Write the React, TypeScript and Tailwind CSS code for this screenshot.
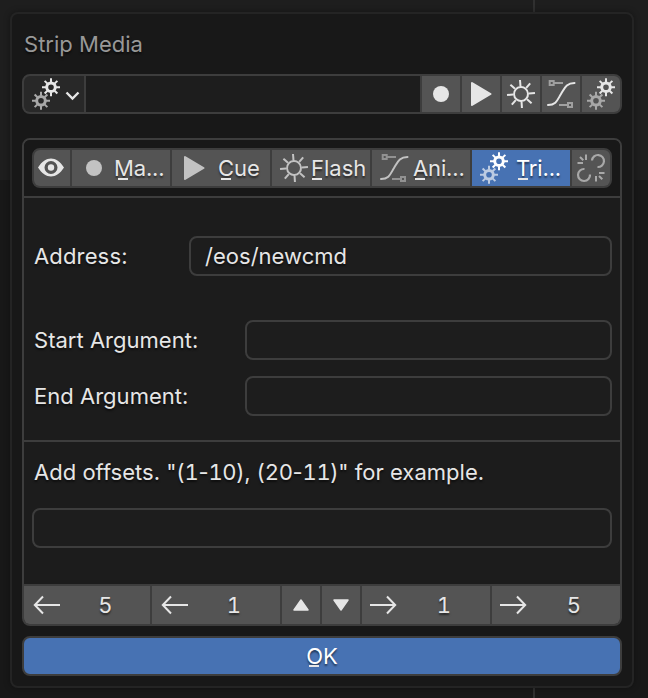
import type { ReactNode } from "react";

const LIGHT = "#e6e6e6";
const DIM = "#c2c2c2";

function Gear({ x, y, color }: { x: number; y: number; color: string }) {
  return (
    <g transform={`translate(${x} ${y})`} stroke={color} fill="none">
      <circle r="4.3" strokeWidth="3" />
      {[0, 45, 90, 135, 180, 225, 270, 315].map((a) => (
        <path key={a} d="M0-5V-9" strokeWidth="2" transform={`rotate(${a})`} />
      ))}
    </g>
  );
}

function Icon({ children }: { children: ReactNode }) {
  return (
    <svg width="32" height="32" viewBox="0 0 32 32" className="block shrink-0">
      {children}
    </svg>
  );
}

function GearsIcon({ front = LIGHT, back = "#a8a8a8" }: { front?: string; back?: string }) {
  return (
    <Icon>
      <Gear x={21} y={9.2} color={front} />
      <Gear x={11} y={22.8} color={back} />
    </Icon>
  );
}

function DotIcon({ color = LIGHT }: { color?: string }) {
  return (
    <Icon>
      <circle cx="16" cy="16" r="8" fill={color} />
    </Icon>
  );
}

function PlayIcon({ color = LIGHT }: { color?: string }) {
  return (
    <Icon>
      <path d="M7 5L25.500 16L7 27Z" fill={color} stroke={color} strokeWidth="2" strokeLinejoin="round" />
    </Icon>
  );
}

function SunIcon({ color = LIGHT }: { color?: string }) {
  return (
    <Icon>
      <g transform="translate(16 16) rotate(-4)" stroke={color} strokeWidth="2" fill="none">
        <circle r="7" />
        {[0, 45, 90, 135, 180, 225, 270, 315].map((a) => (
          <path key={a} d="M0-8V-14" transform={`rotate(${a})`} />
        ))}
      </g>
    </Icon>
  );
}

function CurveIcon({ color = LIGHT, handle = "#a0a0a0" }: { color?: string; handle?: string }) {
  return (
    <Icon>
      <g fill="none" strokeWidth="2" stroke={handle}>
        <path d="M4.7 3H8.7V7H4.7ZM9 5H18M23 25H27V29H23ZM14 27H23" />
        <path d="M3 27C11.500 27 12.500 21.500 16 16S21 5 29.500 5" stroke={color} strokeLinecap="round" />
      </g>
    </Icon>
  );
}

function EyeIcon() {
  return (
    <Icon>
      <path
        fillRule="evenodd"
        fill={LIGHT}
        d="M2 15.500C9.500 3.500 20.500 3.500 28 15.500C20.500 27.500 9.500 27.500 2 15.500ZM15 9A6.500 6.500 0 1 0 15 22A6.500 6.500 0 1 0 15 9Z"
      />
      <circle cx="15" cy="15.500" r="3.200" fill={LIGHT} />
    </Icon>
  );
}

function UnlinkIcon() {
  return (
    <Icon>
      <g fill="none" stroke="#a8a8a8" strokeWidth="2.200">
        <path d="M17 8.500A6 6 0 1 1 22.500 15M9.500 17A6 6 0 1 0 15 22.500" />
        <path d="M5 5L8.300 8.300M11 2.500V8M2.500 11H8M24 24L27.300 27.300M21 24V29.500M24 21H29.500" strokeWidth="2" />
      </g>
    </Icon>
  );
}

function ArrowIcon({ right = false }: { right?: boolean }) {
  return (
    <svg width="28" height="20" viewBox="0 0 28 20" className={right ? "shrink-0 rotate-180" : "shrink-0"}>
      <path d="M27 10H2M10 1.500L1.800 10L10 18.500" fill="none" stroke={LIGHT} strokeWidth="2" />
    </svg>
  );
}

function TriangleIcon({ down = false }: { down?: boolean }) {
  return (
    <svg width="16" height="12" viewBox="0 0 16 12" className={down ? "rotate-180" : ""}>
      <path d="M8 1L15 11H1Z" fill={LIGHT} stroke={LIGHT} strokeWidth="1.500" strokeLinejoin="round" />
    </svg>
  );
}

/* Label whose first letter carries the keyboard accelerator mark. */
function Accel({ text, mark }: { text: string; mark: string }) {
  return (
    <span className="relative whitespace-nowrap">
      {text}
      <span className={`absolute top-[23px] h-[2px] w-[10px] bg-[#e6e6e6] ${mark}`} />
    </span>
  );
}

function Tab({ icon, text, pad, mark, active = false }: { icon: ReactNode; text: string; pad: string; mark: string; active?: boolean }) {
  return (
    <div className={`flex w-[98px] items-center pl-[6px] ${active ? "bg-[#4772b3] text-white" : "bg-[#545454]"}`}>
      {icon}
      <span className={pad}>
        <Accel text={text} mark={mark} />
      </span>
    </div>
  );
}

function Field({ className, children }: { className: string; children?: ReactNode }) {
  return (
    <div className={`flex h-10 items-center rounded-lg border-2 border-[#3d3d3d] bg-[#1d1d1d] ${className}`}>
      {children}
    </div>
  );
}

function Step({ right = false, value, className }: { right?: boolean; value: string; className: string }) {
  return (
    <div className={`flex shrink-0 items-center bg-[#545454] ${className}`}>
      <ArrowIcon right={right} />
      <span className={right ? "ml-1 w-[86px] text-center tabular-nums" : "w-[90px] text-center tabular-nums"}>{value}</span>
    </div>
  );
}

/* Digits are set at a fixed width, everything else proportionally. */
function Digits({ text }: { text: string }) {
  return (
    <>
      {text.split(/(\d+)/).map((part, i) => (
        <span key={i} className={i % 2 === 1 ? "tabular-nums tracking-[-0.450px]" : ""}>{part}</span>
      ))}
    </>
  );
}

export default function App() {
  return (
    <div className="relative h-[698px] w-[648px] overflow-hidden bg-[#181818] font-['Inter',sans-serif] text-[22px] leading-[28px] tracking-[0.02px] text-[#e6e6e6] [text-shadow:0_2px_2px_rgba(0,0,0,0.55)]">
      <div className="absolute inset-x-0 top-0 h-[180px] bg-[#1e1e1e]" />
      <div className="absolute inset-y-0 left-[533px] w-[2px] bg-[#303030]" />
      <div className="relative pl-[10px] pt-3">
        <div className="flex h-[676px] w-[624px] flex-col rounded-lg border-2 border-[#242424] bg-[#181818] px-[10px] shadow-[0_0_6px_rgba(0,0,0,0.35)]">
          <div className="mt-[16px] h-[28px] pl-[2px] text-[#989898]">Strip Media</div>

          <div className="mt-[16px] flex h-10 shrink-0 gap-[2px] overflow-hidden rounded-lg border-2 border-[#3d3d3d] bg-[#3d3d3d]">
            <div className="flex w-[60px] items-center bg-[#282828] pl-[6px]">
              <GearsIcon />
              <svg width="15" height="10" viewBox="0 0 15 10" className="ml-[3px] mt-[3px] shrink-0">
                <path d="M1.500 1.500L7.500 7.500L13.500 1.500" fill="none" stroke={LIGHT} strokeWidth="2.400" />
              </svg>
            </div>
            <div className="flex-1 bg-[#1d1d1d]" />
            <div className="flex w-[38px] items-center justify-center bg-[#545454]"><DotIcon /></div>
            <div className="flex w-[38px] items-center justify-center bg-[#545454]"><PlayIcon /></div>
            <div className="flex w-[38px] items-center justify-center bg-[#545454]"><SunIcon /></div>
            <div className="flex w-[38px] items-center justify-center bg-[#545454]"><CurveIcon /></div>
            <div className="flex w-[38px] items-center justify-center bg-[#545454]"><GearsIcon /></div>
          </div>

          <div className="mt-6 h-[488px] shrink-0 overflow-hidden rounded-lg border-2 border-[#3d3d3d] bg-[#1c1c1c]">
            <div className="h-[58px] border-b-2 border-[#3d3d3d] bg-[#181818] px-2 pt-2">
              <div className="flex h-10 gap-[2px] overflow-hidden rounded-lg border-2 border-[#3d3d3d] bg-[#3d3d3d]">
                <div className="flex w-[36px] items-center justify-center bg-[#545454]"><EyeIcon /></div>
                <Tab icon={<DotIcon color={DIM} />} text="Ma..." pad="pl-[4px] tracking-[-0.15px]" mark="left-[4px]" />
                <Tab icon={<PlayIcon color={DIM} />} text="Cue" pad="pl-[8px]" mark="left-[3px]" />
                <Tab icon={<SunIcon color={DIM} />} text="Flash" pad="pl-[1px]" mark="left-[1px]" />
                <Tab icon={<CurveIcon color={DIM} handle="#929292" />} text="Ani..." pad="pl-[3px] tracking-[-0.15px]" mark="left-[2px]" />
                <Tab icon={<GearsIcon front="#ffffff" back="#bccbe2" />} text="Tri..." pad="pl-[6px] tracking-[-0.15px]" mark="left-[2px]" active />
                <div className="flex flex-1 items-center justify-center bg-[#545454]"><UnlinkIcon /></div>
              </div>
            </div>

            <div className="h-[244px] border-b-2 border-[#3d3d3d] pl-[10px] pr-2 pt-[38px]">
              <div className="flex items-center justify-between">
                <span className="tracking-[0.15px]">Address:</span>
                <Field className="w-[423px] pl-[14px]">/eos/newcmd</Field>
              </div>
              <div className="mt-11 flex items-center justify-between">
                <span>Start Argument:</span>
                <Field className="w-[367px]" />
              </div>
              <div className="mt-4 flex items-center justify-between">
                <span>End Argument:</span>
                <Field className="w-[367px]" />
              </div>
            </div>

            <div className="h-[142px] px-2 pt-4">
              <div className="whitespace-nowrap pl-[2px]">
                <Digits text={'Add offsets. "(1-10), (20-11)" for example.'} />
              </div>
              <Field className="mt-[22px]" />
            </div>

            <div className="flex h-10 gap-[2px] border-t-2 border-[#3d3d3d] bg-[#3d3d3d]">
              <Step value="5" className="w-[126px] pl-[9px]" />
              <Step value="1" className="w-[128px] pl-[9px]" />
              <div className="flex w-[38px] items-center justify-center bg-[#545454]"><TriangleIcon /></div>
              <div className="flex w-[38px] items-center justify-center bg-[#545454]"><TriangleIcon down /></div>
              <Step right value="1" className="w-[128px] pl-[7px]" />
              <Step right value="5" className="w-[128px] pl-[7px]" />
            </div>
          </div>

          <div className="mt-[10px] flex h-10 shrink-0 items-center justify-center rounded-lg border-2 border-[#3d3d3d] bg-[#4772b3] text-white">
            <Accel text="OK" mark="left-[3px]" />
          </div>
        </div>
      </div>
    </div>
  );
}
